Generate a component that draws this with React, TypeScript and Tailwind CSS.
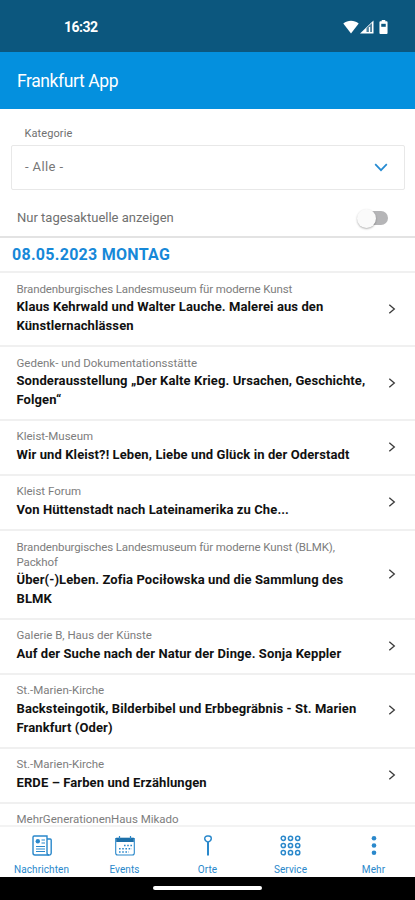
import React, { useState } from 'react';
import clsx from 'clsx';

interface EventItem {
  venue: string[];
  title: string[];
  compact?: boolean;
}

const events: EventItem[] = [
  {
    venue: ['Brandenburgisches Landesmuseum für moderne Kunst'],
    title: ['Klaus Kehrwald und Walter Lauche. Malerei aus den', 'Künstlernachlässen'],
    compact: true,
  },
  {
    venue: ['Gedenk- und Dokumentationsstätte'],
    title: ['Sonderausstellung „Der Kalte Krieg. Ursachen, Geschichte,', 'Folgen“'],
  },
  {
    venue: ['Kleist-Museum'],
    title: ['Wir und Kleist?! Leben, Liebe und Glück in der Oderstadt'],
  },
  {
    venue: ['Kleist Forum'],
    title: ['Von Hüttenstadt nach Lateinamerika zu Che...'],
  },
  {
    venue: ['Brandenburgisches Landesmuseum für moderne Kunst (BLMK),', 'Packhof'],
    title: ['Über(-)Leben. Zofia Pociłowska und die Sammlung des', 'BLMK'],
    compact: true,
  },
  {
    venue: ['Galerie B, Haus der Künste'],
    title: ['Auf der Suche nach der Natur der Dinge. Sonja Keppler'],
  },
  {
    venue: ['St.-Marien-Kirche'],
    title: ['Backsteingotik, Bilderbibel und Erbbegräbnis - St. Marien', 'Frankfurt (Oder)'],
  },
  {
    venue: ['St.-Marien-Kirche'],
    title: ['ERDE – Farben und Erzählungen'],
  },
  {
    venue: ['MehrGenerationenHaus Mikado'],
    title: [],
  },
];

function StatusBar() {
  return (
    <div className="flex h-[52px] shrink-0 items-center justify-between bg-[#0c577e] pt-[2px] pr-[26px] pl-16 text-white">
      <span className="pt-px text-[14px] font-bold tracking-[-0.5px]">16:32</span>
      <div className="flex items-center">
        <svg width="16" height="14" viewBox="0 0 16 14" fill="currentColor">
          <path d="M0.3 3.6C4.8-.2 11.2-.2 15.7 3.6L8 13.5z" />
        </svg>
        <svg width="14" height="14" viewBox="0 0 14 14" className="ml-px">
          <path d="M0 13.5 13.5.5v13z" fill="currentColor" />
          <path d="M6.5 12V8L12 3v9z" fill="#4c819e" />
          <path d="M9.5 7v5.5" stroke="white" strokeWidth="1.3" />
        </svg>
        <svg width="9" height="14" viewBox="0 0 10 14" preserveAspectRatio="none" className="mr-px ml-[5px]">
          <path d="M3 0h4v1.3h1.5a1 1 0 0 1 1 1V13a1 1 0 0 1-1 1h-7a1 1 0 0 1-1-1V2.3a1 1 0 0 1 1-1H3z" fill="currentColor" />
          <path d="M2.5 3.8h5v3h-5z" fill="#0c577e" />
        </svg>
      </div>
    </div>
  );
}

function EventRow({ venue, title, compact }: EventItem) {
  return (
    <li className="flex min-h-[55px] items-center border-b-2 border-[#f0f0f0] pt-[8.4px] pr-[19px] pb-[9.5px] pl-[16.5px]">
      <div className="flex-1 self-start whitespace-nowrap">
        <p className={clsx('text-[11.5px] leading-[15px] text-[#7d7d7d]', compact && 'tracking-[-0.12px]')}>
          {venue.map((line) => (
            <span key={line} className="block">{line}</span>
          ))}
        </p>
        <p className="mt-[1.5px] text-[13px] leading-[18.7px] font-bold tracking-[0.1px] text-[#111]">
          {title.map((line) => (
            <span key={line} className="block">{line}</span>
          ))}
        </p>
      </div>
      {title.length > 0 && (
        <svg width="8" height="10" viewBox="0 0 8 10" fill="none" stroke="#3a3a3a" strokeWidth="1.3" className="shrink-0">
          <path d="M1.3.8 6.3 5l-5 4.2" />
        </svg>
      )}
    </li>
  );
}

function NewsIcon() {
  return (
    <svg width="20" height="21" viewBox="0 0 20 21" fill="none" stroke="currentColor" strokeWidth="1.4">
      <path d="M15 18V1H2.2A1.2 1.2 0 0 0 1 2.2V18a2 2 0 0 0 2 2h14" />
      <path d="M15 4h3.2a1 1 0 0 1 1 1v13a2 2 0 0 1-4.2 0" />
      <path d="M9.5 5H13M9.5 8H13M4 11.5h9M4 14h9M4 16.5h9" strokeWidth="1" />
      <circle cx="5.8" cy="6.2" r="2.2" fill="currentColor" stroke="none" />
    </svg>
  );
}

function CalendarIcon() {
  return (
    <svg width="20" height="20" viewBox="0 0 20 20" fill="none" stroke="currentColor">
      <path d="M.7 2.5h18.6V17a2 2 0 0 1-2 2H2.7a2 2 0 0 1-2-2z" strokeWidth="1.1" />
      <path d="M1.2 1.7h17.6v4.3H1.2z" fill="#1d6fa8" stroke="none" />
      <path d="M4.5 0v3M15.5 0v3" strokeWidth="1.2" />
      <path d="M9 9.5h8M4 12.7h13M4 16h10" strokeWidth="1.6" strokeDasharray="1.6 1.6" />
    </svg>
  );
}

function PinIcon() {
  return (
    <svg width="10" height="21" viewBox="0 0 10 21" fill="none" stroke="currentColor">
      <path d="M5 7.2C3.2 6.6 1.7 5.2 1.7 3.6A2.6 2.6 0 0 1 4.3 1h1.4a2.6 2.6 0 0 1 2.6 2.6C8.3 5.2 6.8 6.6 5 7.2z" strokeWidth="1.4" />
      <path d="M5 7v13.5" strokeWidth="2" />
    </svg>
  );
}

function GridIcon() {
  return (
    <svg width="21" height="21" viewBox="0 0 21 21" fill="none" stroke="currentColor" strokeWidth="1.5">
      {[3.3, 10.5, 17.7].map((y) =>
        [3.3, 10.5, 17.7].map((x) => <circle key={`${x}-${y}`} cx={x} cy={y} r="2.1" />)
      )}
    </svg>
  );
}

function MoreIcon() {
  return (
    <svg width="6" height="21" viewBox="0 0 6 21" fill="currentColor">
      <circle cx="3" cy="3.2" r="2.3" />
      <circle cx="3" cy="10.5" r="2.3" />
      <circle cx="3" cy="17.8" r="2.3" />
    </svg>
  );
}

const tabs = [
  { label: 'Nachrichten', icon: <NewsIcon /> },
  { label: 'Events', icon: <CalendarIcon /> },
  { label: 'Orte', icon: <PinIcon /> },
  { label: 'Service', icon: <GridIcon /> },
  { label: 'Mehr', icon: <MoreIcon /> },
];

export default function App() {
  const [todayOnly, setTodayOnly] = useState(false);

  return (
    <div className="flex h-[900px] w-[415px] flex-col overflow-hidden bg-white font-['Roboto',sans-serif]">
      <StatusBar />
      <header className="flex h-[57px] shrink-0 items-center bg-[#0490de] pt-[2px] pl-[17px]">
        <h1 className="text-[17.5px] tracking-[-0.4px] text-white">Frankfurt App</h1>
      </header>

      <div className="shrink-0 px-[11px] pt-[17px]">
        <label className="block pl-[13.5px] text-[11px] leading-[15px] tracking-[0.1px] text-[#707070]">Kategorie</label>
        <button className="mt-1 flex h-[45px] w-[394px] items-center justify-between rounded-[2px] border border-[#e8e8e8] pr-[16px] pb-[2px] pl-[13px] text-[13px] tracking-[0.4px] text-[#777]">
          - Alle -
          <svg width="14" height="9" viewBox="0 0 14 9" fill="none" stroke="#258bd2" strokeWidth="1.7" className="mt-[2px]">
            <path d="M1.2 1.2 7 7.2l5.8-6" />
          </svg>
        </button>
      </div>

      <div className="flex h-[46px] shrink-0 items-center justify-between pt-[10px] pr-[27px] pl-[17px]">
        <span className="text-[13px] text-[#707070]">Nur tagesaktuelle anzeigen</span>
        <button
          onClick={() => setTodayOnly(!todayOnly)}
          className={clsx('flex h-[14px] w-[30px] items-center rounded-full', todayOnly ? 'justify-end bg-[#8cc8ee]' : 'bg-[#b5b5b7]')}
        >
          <span className="-ml-px h-[19px] w-[19px] shrink-0 rounded-full bg-[#fafafa] shadow-[0_1px_2px_rgba(0,0,0,0.3)]" />
        </button>
      </div>

      <h2 className="h-[37.4px] shrink-0 border-y-2 border-t-[#e3e3e3] border-b-[#f0f0f0] pl-3 text-[16px] leading-[34px] font-bold tracking-[0.28px] text-[#1688d8]">
        08.05.2023 MONTAG
      </h2>

      <ul className="min-h-0 flex-1 overflow-hidden">
        {events.map((event, i) => (
          <EventRow key={i} {...event} />
        ))}
      </ul>

      <nav className="flex h-[52px] shrink-0 border-t-2 border-[#f3f3f3] bg-white text-[#2a88cb]">
        {tabs.map((tab) => (
          <button key={tab.label} className="flex flex-1 flex-col items-center pt-[8px]">
            <span className="flex h-[21px] items-center">{tab.icon}</span>
            <span className="mt-[7px] text-[10px] leading-[14px] tracking-[0.1px]">{tab.label}</span>
          </button>
        ))}
      </nav>
      <div className="flex h-[23px] shrink-0 justify-center bg-black pt-[9px]">
        <span className="h-[4px] w-[109px] rounded-full bg-white" />
      </div>
    </div>
  );
}
